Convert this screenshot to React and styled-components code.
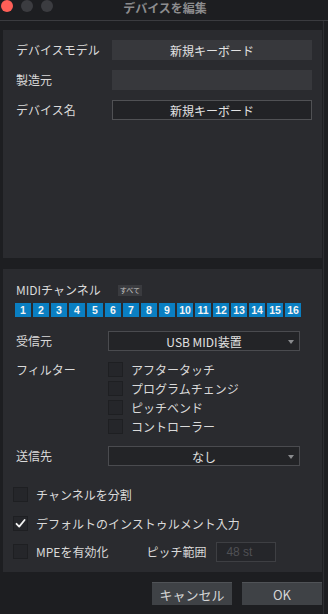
import React, { useState } from 'react';
import styled, { createGlobalStyle } from 'styled-components';

const GlobalStyle = createGlobalStyle`
  html, body {
    margin: 0;
    padding: 0;
    background: #1d1e21;
  }
  body {
    font-family: 'Noto Sans CJK JP', 'Noto Sans', sans-serif;
  }
`;

const channels = Array.from({ length: 16 }, (_, i) => i + 1);
const filters = ['アフタータッチ', 'プログラムチェンジ', 'ピッチベンド', 'コントローラー'];

const Check = ({ checked }) => (
  <CheckBox>
    {checked ? (
      <svg width="13" height="13" viewBox="0 0 13 13">
        <path d="M2.5 6.8 L5.2 9.6 L10.6 3" fill="none" stroke="#f2f2f2" strokeWidth="1.8" strokeLinecap="round" strokeLinejoin="round" />
      </svg>
    ) : null}
  </CheckBox>
);

const App = () => {
  const [splitChannels] = useState(false);

  return (
    <Window>
      <GlobalStyle />
      <TitleBar>
        <Lights>
          <Light color="#fe5f57" />
          <Light color="#3b3c40" />
          <Light color="#3b3c40" />
        </Lights>
        <Title>デバイスを編集</Title>
      </TitleBar>
      <Body>
        <TopPanel>
          <FieldRow>
            <Label>デバイスモデル</Label>
            <Field>新規キーボード</Field>
          </FieldRow>
          <FieldRow>
            <Label>製造元</Label>
            <Field />
          </FieldRow>
          <FieldRow>
            <Label>デバイス名</Label>
            <Field editable>新規キーボード</Field>
          </FieldRow>
        </TopPanel>
        <MidiPanel>
          <ChannelHeader>
            <Label>MIDIチャンネル</Label>
            <AllButton>すべて</AllButton>
          </ChannelHeader>
          <Channels>
            {channels.map(n => (
              <ChannelButton key={n}>{n}</ChannelButton>
            ))}
          </Channels>
          <SelectRow>
            <Label>受信元</Label>
            <Select>
              USB MIDI装置
              <Caret />
            </Select>
          </SelectRow>
          <FilterRow>
            <Label>フィルター</Label>
            <FilterList>
              {filters.map(f => (
                <CheckRow key={f}>
                  <Check />
                  <CheckLabel>{f}</CheckLabel>
                </CheckRow>
              ))}
            </FilterList>
          </FilterRow>
          <SelectRow send>
            <Label>送信先</Label>
            <Select>
              なし
              <Caret />
            </Select>
          </SelectRow>
          <Options>
            <CheckRow>
              <Check checked={splitChannels} />
              <CheckLabel>チャンネルを分割</CheckLabel>
            </CheckRow>
            <CheckRow>
              <Check checked />
              <CheckLabel>デフォルトのインストゥルメント入力</CheckLabel>
            </CheckRow>
            <CheckRow>
              <Check />
              <CheckLabel>MPEを有効化</CheckLabel>
              <PitchLabel>ピッチ範囲</PitchLabel>
              <PitchInput>48 st</PitchInput>
            </CheckRow>
          </Options>
        </MidiPanel>
        <Footer>
          <Button>キャンセル</Button>
          <Button>OK</Button>
        </Footer>
      </Body>
    </Window>
  );
};

export default App;

const Window = styled.div`
  width: 328px;
  height: 614px;
  background: #1d1e21;
  color: #d9d9d9;
  font-size: 12px;
  overflow: hidden;
  display: flex;
  flex-direction: column;
`;

const TitleBar = styled.div`
  position: relative;
  height: 20px;
  flex-shrink: 0;
  border-bottom: 1px solid #3a3b3f;
  display: flex;
  align-items: flex-start;
  justify-content: center;
`;

const Lights = styled.div`
  position: absolute;
  left: 1px;
  top: 0px;
  display: flex;
  gap: 8px;
`;

const Light = styled.div`
  width: 12px;
  height: 12px;
  border-radius: 50%;
  background: ${props => props.color};
`;

const Title = styled.div`
  font-size: 12px;
  line-height: 13px;
  margin-top: 1px;
  font-weight: 700;
  color: #8c8c8e;
  margin-left: 2px;
`;

const Body = styled.div`
  flex: 1;
  display: flex;
  flex-direction: column;
  padding: 9px 0 0 3px;
  width: 320px;
  border-right: 1px solid #2d2e32;
`;

const Panel = styled.div`
  background: #2a2b2f;
  width: 319px;
  box-sizing: border-box;
`;

const TopPanel = styled(Panel)`
  height: 228px;
  padding: 10px 10px 0 13px;
  display: flex;
  flex-direction: column;
  gap: 10px;
`;

const FieldRow = styled.div`
  display: flex;
  align-items: center;
  justify-content: space-between;
  height: 20px;
`;

const Label = styled.div`
  font-size: 12px;
  color: #dadada;
  line-height: 14px;
`;

const Field = styled.div`
  width: 200px;
  height: 20px;
  box-sizing: border-box;
  background: ${props => (props.editable ? '#222326' : '#37383c')};
  border: ${props => (props.editable ? '1px solid #505154' : 'none')};
  display: flex;
  align-items: center;
  justify-content: center;
  font-size: 12px;
  color: #e2e2e2;
`;

const MidiPanel = styled(Panel)`
  margin-top: 11px;
  height: 303px;
  padding: 14px 0 0 13px;
`;

const ChannelHeader = styled.div`
  display: flex;
  align-items: center;
  height: 14px;
`;

const AllButton = styled.div`
  margin-left: 17px;
  padding: 0 2px;
  height: 11px;
  line-height: 11px;
  background: #3a3b3f;
  font-size: 7px;
  color: #c2c2c2;
  white-space: nowrap;
`;

const Channels = styled.div`
  margin-top: 6px;
  margin-left: -1px;
  display: grid;
  grid-template-columns: repeat(16, 16px);
  gap: 2px;
`;

const ChannelButton = styled.div`
  height: 14px;
  background: #0a7fc2;
  color: #f4f4f4;
  font-family: 'Liberation Sans', Arial, sans-serif;
  font-size: 10.5px;
  font-weight: 700;
  display: flex;
  align-items: center;
  justify-content: center;
`;

const SelectRow = styled.div`
  display: flex;
  align-items: center;
  justify-content: space-between;
  width: 284px;
  margin-top: ${props => (props.send ? '12px' : '14px')};
`;

const Select = styled.div`
  position: relative;
  width: 192px;
  height: 20px;
  box-sizing: border-box;
  border: 1px solid #4a4b4f;
  background: #232427;
  display: flex;
  align-items: center;
  justify-content: center;
  font-size: 12px;
  color: #e2e2e2;
`;

const Caret = styled.div`
  position: absolute;
  right: 5px;
  top: 8px;
  width: 0;
  height: 0;
  border-left: 3.5px solid transparent;
  border-right: 3.5px solid transparent;
  border-top: 4px solid #8a8b8e;
`;

const FilterRow = styled.div`
  display: flex;
  margin-top: 11px;
  & > ${Label} {
    width: 92px;
    margin-top: 1px;
  }
`;

const FilterList = styled.div`
  display: flex;
  flex-direction: column;
  gap: 4px;
`;

const CheckRow = styled.div`
  display: flex;
  align-items: center;
  height: 15px;
`;

const CheckBox = styled.div`
  width: 15px;
  height: 15px;
  box-sizing: border-box;
  background: #25262a;
  border: 1px solid #1e1f22;
  display: flex;
  align-items: center;
  justify-content: center;
  flex-shrink: 0;
`;

const CheckLabel = styled.div`
  margin-left: 8px;
  font-size: 12px;
  color: #dadada;
`;

const Options = styled.div`
  margin-top: 21px;
  margin-left: -3px;
  display: flex;
  flex-direction: column;
  gap: 14px;
  & ${CheckRow}:nth-child(3) {
    margin-top: -1px;
  }
`;

const PitchLabel = styled.div`
  margin-left: 38px;
  font-size: 12px;
  color: #dadada;
`;

const PitchInput = styled.div`
  margin-left: 10px;
  width: 60px;
  height: 20px;
  box-sizing: border-box;
  border: 1px solid #3e3f43;
  background: #25262a;
  color: #4f5054;
  font-family: 'Liberation Sans', Arial, sans-serif;
  font-size: 12px;
  display: flex;
  align-items: center;
  padding-left: 9px;
`;

const Footer = styled.div`
  display: flex;
  justify-content: flex-end;
  gap: 10px;
  margin-top: 10px;
  width: 319px;
`;

const Button = styled.div`
  width: 80px;
  height: 23px;
  box-sizing: border-box;
  background: #3f4246;
  border-top: 1px solid #505357;
  display: flex;
  align-items: center;
  justify-content: center;
  font-size: 13px;
  color: #d6d6d6;
`;
